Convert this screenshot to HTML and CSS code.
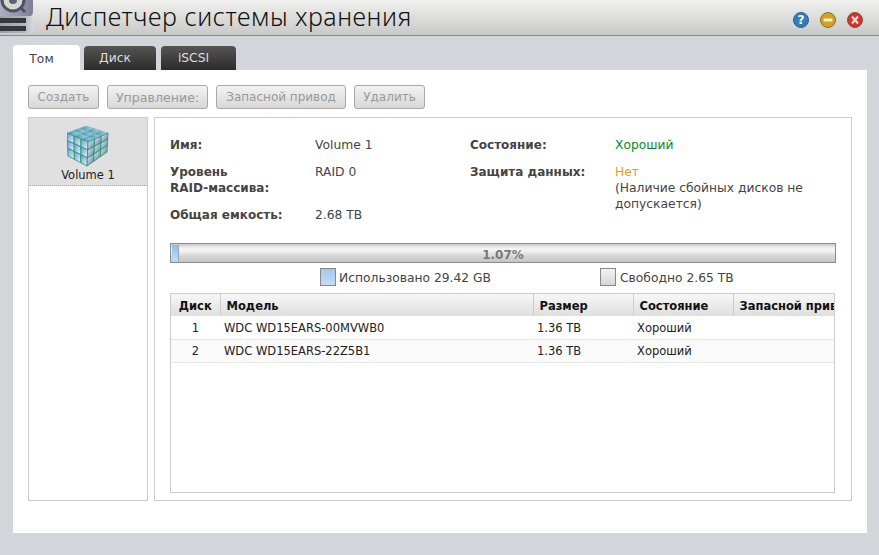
FILE: index.html
```html
<!DOCTYPE html>
<html lang="ru">
<head>
<meta charset="utf-8">
<title>Диспетчер системы хранения</title>
<link rel="stylesheet" href="styles.css">
</head>
<body>
<header class="titlebar">
  <svg class="logo" width="36" height="35" viewBox="0 0 36 35">
    <defs>
      <linearGradient id="lg" x1="0" y1="0" x2="1" y2="0"><stop offset="0" stop-color="#b9b9c6"/><stop offset="1" stop-color="#7c7f96"/></linearGradient>
      <linearGradient id="lb" x1="0" y1="0" x2="1" y2="0"><stop offset="0" stop-color="#9a9ba4"/><stop offset="0.75" stop-color="#b4b5c0"/><stop offset="1" stop-color="#d8d8de"/></linearGradient>
    </defs>
    <rect x="-6" y="-12" width="39" height="29" rx="5" fill="url(#lg)"/>
    <circle cx="13" cy="0" r="11" fill="#d8d6d0" stroke="#4c5068" stroke-width="3"/>
    <circle cx="13" cy="0" r="4" fill="#5c6078"/>
    <path d="M20 7l5 5" stroke="#4c5068" stroke-width="3"/>
    <rect x="-4" y="16" width="37" height="10" rx="2" fill="url(#lb)"/>
    <rect x="-4" y="25" width="37" height="8" rx="2" fill="url(#lb)"/>
    <rect x="0" y="18" width="26" height="5" fill="#37383a"/>
    <rect x="0" y="26" width="26" height="5" fill="#37383a"/>
  </svg>
  <h1 class="title">Диспетчер системы хранения</h1>
  <div class="winbtns">
    <svg class="winbtn" width="16" height="16" viewBox="0 0 16 16"><circle cx="8" cy="8" r="7.5" fill="#2f7fc0" stroke="#33607f"/><text x="8" y="12" class="q">?</text></svg>
    <svg class="winbtn" width="16" height="16" viewBox="0 0 16 16"><circle cx="8" cy="8" r="7.5" fill="#d2a21e" stroke="#8a7330"/><rect x="3.5" y="6.5" width="9" height="3" rx="1" fill="#f6ecc8"/></svg>
    <svg class="winbtn" width="16" height="16" viewBox="0 0 16 16"><circle cx="8" cy="8" r="7.5" fill="#d4342c" stroke="#8c4a48"/><path d="M5 4.5l6 7M11 4.5l-6 7" stroke="#f6d8d4" stroke-width="2.2"/></svg>
  </div>
</header>

<div class="tabs">
  <div class="tab tab-active">Том</div>
  <div class="tab tab-disk">Диск</div>
  <div class="tab tab-iscsi">iSCSI</div>
</div>

<main class="panel">
  <div class="toolbar">
    <button class="btn btn-create">Создать</button>
    <button class="btn btn-manage">Управление:</button>
    <button class="btn btn-spare">Запасной привод</button>
    <button class="btn btn-delete">Удалить</button>
  </div>
  <div class="columns">
    <aside class="volumes">
      <div class="volume">
        <svg class="cube" width="42" height="42" viewBox="0 0 42 42">
          <defs>
            <linearGradient id="cl" x1="0" y1="0" x2="1" y2="1"><stop offset="0" stop-color="#5f9fd0"/><stop offset="1" stop-color="#f0f6fc"/></linearGradient>
            <linearGradient id="cr" x1="0" y1="0" x2="1" y2="1"><stop offset="0" stop-color="#eef5fb"/><stop offset="1" stop-color="#4f789c"/></linearGradient>
            <linearGradient id="ct" x1="0" y1="0" x2="1" y2="0"><stop offset="0" stop-color="#3f8aa6"/><stop offset="1" stop-color="#b4d8e6"/></linearGradient>
          </defs>
          <g fill="url(#ct)" stroke="#78bcc4" stroke-width="0.6">
            <path d="M0 8 6.3 5.7 13.3 8.7 7 11Z"/><path d="M6.3 5.7 12.7 3.3 19.7 6.3 13.3 8.7Z"/><path d="M12.7 3.3 19 1 26.3 3.3 19.7 6.3Z"/>
            <path d="M7 11 13.3 8.7 20.5 11.7 14 14Z"/><path d="M13.3 8.7 19.7 6.3 27 8.7 20.5 11.7Z"/><path d="M19.7 6.3 26.3 3.3 33.7 5.7 27 8.7Z"/>
            <path d="M14 14 20.5 11.7 27.7 14 21 17Z"/><path d="M20.5 11.7 27 8.7 34.3 11 27.7 14Z"/><path d="M27 8.7 33.7 5.7 41 8 34.3 11Z"/>
          </g>
          <g fill="url(#cl)" stroke="#23916a" stroke-width="0.8">
            <path d="M0 8 7 11 7.1 18.6 .3 15.7Z"/><path d="M7 11 14 14 13.9 21.9 7.1 18.6Z"/><path d="M14 14 21 17 20.7 25 13.9 21.9Z"/>
            <path d="M.3 15.7 7.1 18.6 7.2 26.4 .7 23.3Z"/><path d="M7.1 18.6 13.9 21.9 13.8 29.8 7.2 26.4Z"/><path d="M13.9 21.9 20.7 25 20.3 33 13.8 29.8Z"/>
            <path d="M.7 23.3 7.2 26.4 7.3 34.3 1 31Z"/><path d="M7.2 26.4 13.8 29.8 13.7 37.7 7.3 34.3Z"/><path d="M13.8 29.8 20.3 33 20 41 13.7 37.7Z"/>
          </g>
          <g fill="url(#cr)" stroke="#23916a" stroke-width="0.8">
            <path d="M21 17 27.7 14 27.4 21.4 20.7 25Z"/><path d="M27.7 14 34.3 11 34 17.7 27.4 21.4Z"/><path d="M34.3 11 41 8 40.7 14.3 34 17.7Z"/>
            <path d="M20.7 25 27.4 21.4 27 28.9 20.3 33Z"/><path d="M27.4 21.4 34 17.7 33.7 24.7 27 28.9Z"/><path d="M34 17.7 40.7 14.3 40.3 20.7 33.7 24.7Z"/>
            <path d="M20.3 33 27 28.9 26.7 36.3 20 41Z"/><path d="M27 28.9 33.7 24.7 33.3 31.7 26.7 36.3Z"/><path d="M33.7 24.7 40.3 20.7 40 27 33.3 31.7Z"/>
          </g>
        </svg>
        <div class="volume-name">Volume 1</div>
      </div>
    </aside>
    <section class="details">
      <div class="info">
        <div class="info-col info-left">
          <div class="label">Имя:</div><div class="value">Volume 1</div>
          <div class="label">Уровень<br>RAID-массива:</div><div class="value">RAID 0</div>
          <div class="label">Общая емкость:</div><div class="value">2.68 TB</div>
        </div>
        <div class="info-col info-right">
          <div class="label">Состояние:</div><div class="value good">Хороший</div>
          <div class="label">Защита данных:</div>
          <div class="value"><span class="warn">Нет</span><br>(Наличие сбойных дисков не допускается)</div>
        </div>
      </div>
      <div class="progress">
        <div class="progress-fill" style="width:1.07%"></div>
        <div class="progress-text">1.07%</div>
      </div>
      <div class="legend">
        <div class="legend-item legend-used"><span class="swatch swatch-used"></span>Использовано 29.42 GB</div>
        <div class="legend-item"><span class="swatch swatch-free"></span>Свободно 2.65 TB</div>
      </div>
      <div class="grid">
        <table>
          <colgroup><col class="c1"><col class="c2"><col class="c3"><col class="c4"><col class="c5"></colgroup>
          <thead>
            <tr><th class="center">Диск</th><th>Модель</th><th>Размер</th><th>Состояние</th><th>Запасной привод</th></tr>
          </thead>
          <tbody>
            <tr><td class="center">1</td><td>WDC WD15EARS-00MVWB0</td><td>1.36 TB</td><td>Хороший</td><td></td></tr>
            <tr class="alt"><td class="center">2</td><td>WDC WD15EARS-22Z5B1</td><td>1.36 TB</td><td>Хороший</td><td></td></tr>
          </tbody>
        </table>
      </div>
    </section>
  </div>
</main>
</body>
</html>
```
FILE: styles.css
```css
* { box-sizing: border-box; }
html, body { height: 100%; }
body {
  margin: 0;
  overflow: hidden;
  background: #d2d5da;
  font-family: "DejaVu Sans", Verdana, sans-serif;
  font-size: 12.3px;
  color: #444;
}
.titlebar {
  display: flex;
  align-items: center;
  height: 36px;
  background: linear-gradient(#f0f0ef, #c9c9c8);
  border-bottom: 1px solid #8a8a8a;
  overflow: hidden;
}
.logo { flex: none; margin-right: 10px; }
.title {
  margin: 0 0 3px;
  font-family: "Noto Sans", sans-serif;
  font-weight: 300;
  font-size: 25px;
  letter-spacing: 0.55px;
  color: #111;
  flex: 1;
}
.winbtns { display: flex; gap: 11px; margin-right: 16px; padding-top: 4px; }
.q { font: bold 12px "DejaVu Sans", sans-serif; fill: #fff; text-anchor: middle; }

.tabs {
  display: flex;
  align-items: flex-end;
  height: 34px;
  margin-left: 13px;
  gap: 4px;
}
.tab {
  height: 24px;
  width: 72px;
  padding: 5px 0 0;
  text-align: center;
  border-radius: 4px 4px 0 0;
  background: linear-gradient(#555, #2b2b2b);
  color: #ddd;
}
.tab-disk { padding-right: 10px; }
.tab-iscsi { width: 75px; margin-left: 1px; padding-right: 10px; }
.tab-active {
  width: 67px;
  height: 25px;
  padding: 7px 10px 0 0;
  background: #fff;
  color: #444;
}

.panel {
  width: 854px;
  height: 463px;
  margin-left: 13px;
  padding: 15px 15px 0;
  background: #fff;
}
.toolbar { display: flex; gap: 8px; height: 32px; }
.btn {
  height: 24px;
  padding: 0;
  border: 1px solid #a8a8a8;
  border-radius: 3px;
  background: linear-gradient(#f2f2f2, #d8d8d8);
  color: #999;
  font: 12px "DejaVu Sans", sans-serif;
}
.btn-create { width: 71px; }
.btn-manage { width: 101px; font-size: 12.6px; }
.btn-spare { width: 130px; }
.btn-delete { width: 71px; }

.columns { display: flex; gap: 6px; height: 384px; }
.volumes {
  width: 120px;
  border: 1px solid #ccc;
}
.volume {
  display: flex;
  flex-direction: column;
  align-items: center;
  height: 68px;
  padding-top: 7px;
  background: #e0e0e0;
  border-bottom: 1px dotted #aaa;
}
.volume-name { margin-top: 1px; font-size: 11.5px; color: #222; }

.details {
  width: 698px;
  border: 1px solid #ccc;
  padding: 0 15px;
}
.info { display: flex; height: 125px; padding-top: 19px; }
.info-col { display: grid; align-content: start; line-height: 16px; row-gap: 11px; }
.info-left { width: 300px; grid-template-columns: 145px 130px; }
.info-right { width: 365px; grid-template-columns: 145px 220px; }
.label { font-weight: bold; font-size: 12px; color: #444; }
.good { color: #0a8a1e; }
.warn { color: #f09a1c; }

.progress {
  position: relative;
  height: 20px;
  border: 1px solid #8c8c8c;
  padding: 1px;
  background: linear-gradient(#c8c8c8, #f1f1f1 22%, #f4f4f4 35%, #d4d4d4 70%, #c6c6c6);
}
.progress-fill {
  height: 100%;
  min-width: 6px;
  background: linear-gradient(#8fbbe8, #c4dcf5);
  border-right: 1px solid #8ea6bf;
}
.progress-text {
  position: absolute;
  inset: 0;
  text-align: center;
  line-height: 22px;
  font-size: 12px;
  font-weight: bold;
  color: #777;
}
.legend { display: flex; height: 30px; padding: 5px 0 0 150px; }
.legend-item { display: flex; align-items: center; height: 18px; padding-top: 2px; }
.legend-used { width: 280px; }
.swatch {
  width: 16px;
  height: 18px;
  margin: -2px 3px 0 0;
  border: 1px solid #888;
}
.legend-item:last-child .swatch { margin-right: 4px; }
.swatch-used { background: linear-gradient(#a5c8ee, #c4dcf5); }
.swatch-free { background: linear-gradient(#f2f2f2, #d6d6d6); }

.grid {
  height: 200px;
  width: 665px;
  border: 1px solid #ccc;
  overflow: hidden;
}
table { width: 665px; border-collapse: collapse; table-layout: fixed; }
.c1 { width: 49px; }
.c2 { width: 313px; }
.c3 { width: 100px; }
.c4 { width: 100px; }
.c5 { width: 103px; }
th {
  height: 22px;
  padding: 1px 6px 0;
  text-align: left;
  color: #111;
  font-size: 11.5px;
  background: linear-gradient(#f7f7f7, #dedede);
  border-right: 1px solid #ccc;
  white-space: nowrap;
  overflow: hidden;
}
th:last-child { border-right: 0; }
td {
  height: 23px;
  padding: 1px 4px 0;
  font-size: 11.5px;
  color: #222;
  border-bottom: 1px solid #e6e6e6;
  white-space: nowrap;
}
.center { text-align: center; }
th.center { padding: 1px 0 0; }
.alt td { background: #fafafa; }
```
